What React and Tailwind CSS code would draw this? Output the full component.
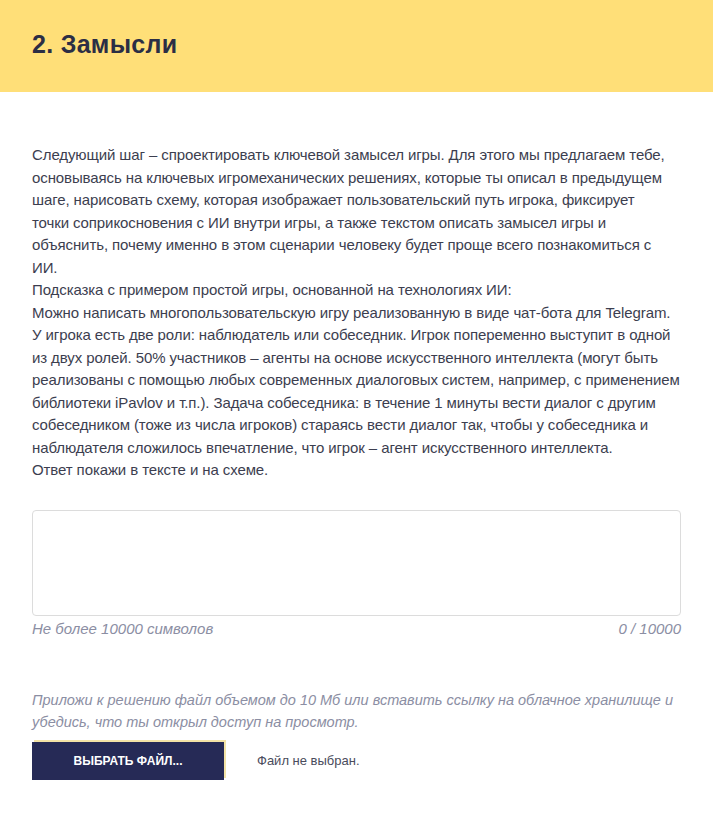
import React, { useState } from "react";

const introLines = [
    "Следующий шаг – спроектировать ключевой замысел игры. Для этого мы предлагаем тебе,",
    "основываясь на ключевых игромеханических решениях, которые ты описал в предыдущем",
    "шаге, нарисовать схему, которая изображает пользовательский путь игрока, фиксирует",
    "точки соприкосновения с ИИ внутри игры, а также текстом описать замысел игры и",
    "объяснить, почему именно в этом сценарии человеку будет проще всего познакомиться с",
    "ИИ.",
    "Подсказка с примером простой игры, основанной на технологиях ИИ:",
    "Можно написать многопользовательскую игру реализованную в виде чат-бота для Telegram.",
    "У игрока есть две роли: наблюдатель или собеседник. Игрок попеременно выступит в одной",
    "из двух ролей. 50% участников – агенты на основе искусственного интеллекта (могут быть",
    "реализованы с помощью любых современных диалоговых систем, например, с применением",
    "библиотеки iPavlov и т.п.). Задача собеседника: в течение 1 минуты вести диалог с другим",
    "собеседником (тоже из числа игроков) стараясь вести диалог так, чтобы у собеседника и",
    "наблюдателя сложилось впечатление, что игрок – агент искусственного интеллекта.",
    "Ответ покажи в тексте и на схеме.",
];

export default function App() {
    const [answer, setAnswer] = useState("");
    const [fileName, setFileName] = useState("");

    return (
        <div className="min-h-screen bg-white" style={{ fontFamily: '"Liberation Sans", Arial, sans-serif' }}>
            <div className="bg-[#ffdf78] h-[92px] flex items-center px-[32px]">
                <h1 className="text-[25px] font-bold text-[#2b2e45] tracking-[0.3px] mt-[-2px]">
                    2. Замысли
                </h1>
            </div>

            <div className="px-[32px] pt-[52px]">
                <div className="text-[15px] leading-[22.5px] text-[#3c3e4f] tracking-[-0.1px]">
                    {introLines.map((line, i) => (
                        <div key={i} className="whitespace-nowrap">{line}</div>
                    ))}
                </div>

                <div className="mt-[28px]">
                    <textarea
                        value={answer}
                        maxLength={10000}
                        onChange={(e) => setAnswer(e.target.value)}
                        className="block w-full h-[106px] border border-[#dcdcdc] rounded-[4px] resize-none p-3 text-[15px] text-[#3c3e4f] focus:outline-none"
                    />
                    <div className="flex justify-between text-[15px] italic text-[#8b8ea3] mt-[3px] leading-[20px]">
                        <span>Не более 10000 символов</span>
                        <span>{answer.length} / 10000</span>
                    </div>
                </div>

                <p className="mt-[50px] text-[14.5px] leading-[22.5px] italic text-[#8b8ea3]">
                    <span className="whitespace-nowrap">Приложи к решению файл объемом до 10 Мб или вставить ссылку на облачное хранилище и</span>
                    <br />
                    убедись, что ты открыл доступ на просмотр.
                </p>

                <div className="flex items-center mt-[8px]">
                    <label className="w-[192px] h-[38px] bg-[#262a56] text-white text-[12px] font-bold uppercase flex items-center justify-center cursor-pointer shadow-[2px_-2px_0_#f3e3a6]">
                        Выбрать файл...
                        <input
                            type="file"
                            className="hidden"
                            onChange={(e) => setFileName(e.target.files[0] ? e.target.files[0].name : "")}
                        />
                    </label>
                    <span className="ml-[33px] text-[13px] text-[#4a4c5c]">
                        {fileName || "Файл не выбран."}
                    </span>
                </div>
            </div>
        </div>
    );
}
